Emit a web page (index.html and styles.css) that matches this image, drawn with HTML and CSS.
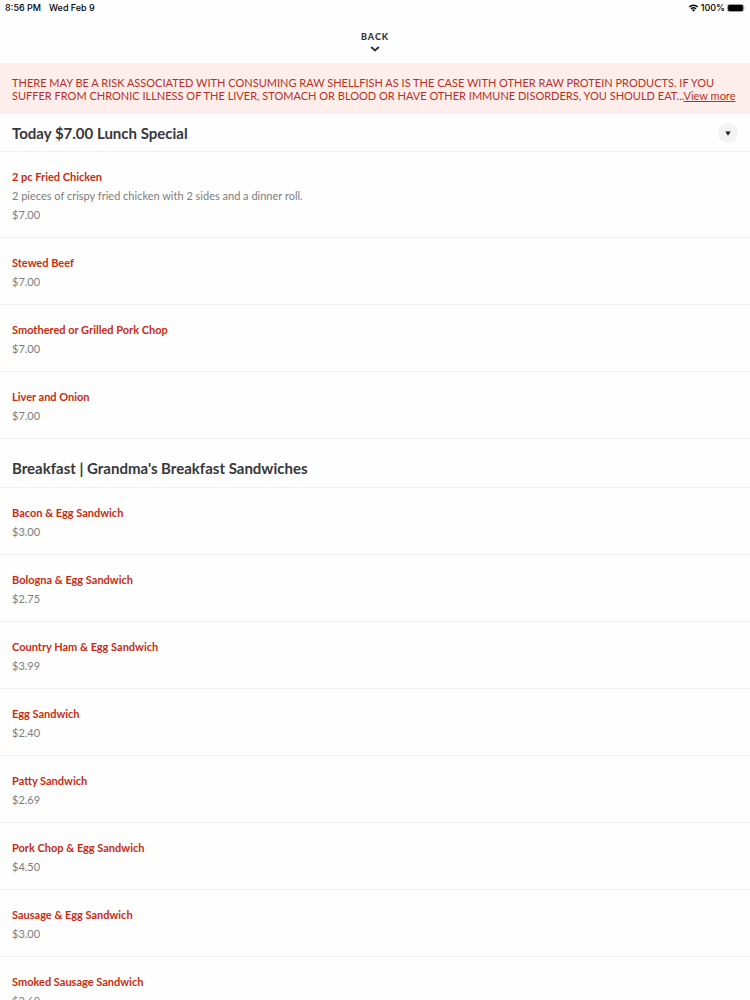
FILE: index.html
```html
<!DOCTYPE html>
<html lang="en">
<head>
    <meta charset="UTF-8">
    <meta name="viewport" content="width=device-width, initial-scale=1.0">
    <title>Menu</title>
    <link rel="stylesheet" href="styles.css">
</head>
<body>

<div class="status-bar">
    <div class="status-left">
        <span>8:56 PM</span>
        <span>Wed Feb 9</span>
    </div>
    <div class="status-right">
        <svg width="11" height="8" viewBox="0 0 20 16" fill="none" stroke="#000">
            <path d="M1.5 6 A12 12 0 0 1 18.5 6" stroke-width="2.8"/>
            <path d="M5 9.8 A7.2 7.2 0 0 1 15 9.8" stroke-width="2.8"/>
            <path d="M7 12 A4.4 4.4 0 0 1 13 12 L10 15.5 Z" fill="#000" stroke="none"/>
        </svg>
        <span>100%</span>
        <svg width="19" height="8" viewBox="0 0 19 8">
            <rect x="0.5" y="0.5" width="16" height="7" rx="2" fill="#fff" stroke="#999"/>
            <rect x="1.1" y="1.1" width="14.8" height="5.8" rx="1.2" fill="#000"/>
            <path d="M17.6 2.8 Q18.8 4 17.6 5.2 Z" fill="#999"/>
        </svg>
    </div>
</div>

<header class="top-bar">
    <button class="back-btn" type="button">
        <span>BACK</span>
        <svg width="10" height="6" viewBox="0 0 10 6" fill="none" stroke="#333" stroke-width="2">
            <path d="M1.2 1 L5 4.4 L8.8 1"/>
        </svg>
    </button>
</header>

<div class="warning">
    THERE MAY BE A RISK ASSOCIATED WITH CONSUMING RAW SHELLFISH AS IS THE CASE WITH OTHER RAW PROTEIN PRODUCTS. IF YOU SUFFER FROM CHRONIC ILLNESS OF THE LIVER, STOMACH OR BLOOD OR HAVE OTHER IMMUNE DISORDERS, YOU SHOULD EAT...<a href="#">View more</a>
</div>

<main>
    <section>
        <div class="section-header current">
            <h2>Today $7.00 Lunch Special</h2>
            <button class="section-btn" type="button" aria-label="Choose section">
                <svg width="6" height="5" viewBox="0 0 6 5"><path d="M0.3 0.4 H5.7 L3 4.8 Z" fill="#222"/></svg>
            </button>
        </div>
        <ul class="menu-list">
            <li>
                <h3>2 pc Fried Chicken</h3>
                <p>2 pieces of crispy fried chicken with 2 sides and a dinner roll.</p>
                <p>$7.00</p>
            </li>
            <li>
                <h3>Stewed Beef</h3>
                <p>$7.00</p>
            </li>
            <li>
                <h3>Smothered or Grilled Pork Chop</h3>
                <p>$7.00</p>
            </li>
            <li>
                <h3>Liver and Onion</h3>
                <p>$7.00</p>
            </li>
        </ul>
    </section>

    <section>
        <div class="section-header">
            <h2>Breakfast | Grandma's Breakfast Sandwiches</h2>
        </div>
        <ul class="menu-list">
            <li>
                <h3>Bacon &amp; Egg Sandwich</h3>
                <p>$3.00</p>
            </li>
            <li>
                <h3>Bologna &amp; Egg Sandwich</h3>
                <p>$2.75</p>
            </li>
            <li>
                <h3>Country Ham &amp; Egg Sandwich</h3>
                <p>$3.99</p>
            </li>
            <li>
                <h3>Egg Sandwich</h3>
                <p>$2.40</p>
            </li>
            <li>
                <h3>Patty Sandwich</h3>
                <p>$2.69</p>
            </li>
            <li>
                <h3>Pork Chop &amp; Egg Sandwich</h3>
                <p>$4.50</p>
            </li>
            <li>
                <h3>Sausage &amp; Egg Sandwich</h3>
                <p>$3.00</p>
            </li>
            <li>
                <h3>Smoked Sausage Sandwich</h3>
                <p>$2.69</p>
            </li>
        </ul>
    </section>
</main>

</body>
</html>
```
FILE: styles.css
```css
* {
    box-sizing: border-box;
}
body {
    font-family: Lato, sans-serif;
    margin: 0;
    background-color: #fefefe;
    color: #37373b;
}
h2, h3, p, ul {
    margin: 0;
    padding: 0;
}
button {
    font-family: inherit;
    border: none;
    cursor: pointer;
}
.status-bar {
    display: flex;
    justify-content: space-between;
    padding: 2px 4px 0 5px;
    font-family: Inter, sans-serif;
    font-size: 9px;
    font-weight: 500;
    line-height: 12px;
    color: #000;
}
.status-left {
    display: flex;
    gap: 8px;
}
.status-right {
    display: flex;
    align-items: center;
    gap: 2px;
}
.top-bar {
    display: flex;
    justify-content: center;
    padding: 17px 0 11px;
}
.back-btn {
    display: flex;
    flex-direction: column;
    align-items: center;
    gap: 3px;
    padding: 0;
    background: none;
    color: #333;
    font-size: 9px;
    font-weight: 900;
    line-height: 12px;
    letter-spacing: 1px;
}
.warning {
    padding: 13px 12px 12px;
    background-color: #feeeeb;
    color: #b83025;
    font-size: 11px;
    line-height: 13px;
}
.warning a {
    color: inherit;
}
.section-header {
    display: flex;
    justify-content: space-between;
    align-items: center;
    padding: 19px 12px 9px;
    border-bottom: 1px solid #f1f1f2;
}
.section-header.current {
    padding: 9px 12px 8px;
}
.section-header h2 {
    font-size: 15px;
    font-weight: 700;
    line-height: 20px;
}
.section-btn {
    display: flex;
    align-items: center;
    justify-content: center;
    width: 20px;
    height: 20px;
    padding: 0;
    border-radius: 50%;
    background-color: #f3f3f3;
}
.menu-list {
    list-style: none;
}
.menu-list li {
    padding: 15px 12px 13px;
    border-bottom: 1px solid #f1f1f2;
    font-size: 11px;
    line-height: 19px;
}
.menu-list h3 {
    font-size: 11px;
    font-weight: 700;
    color: #c72c11;
}
.menu-list p {
    color: #7d7d7d;
}
```
